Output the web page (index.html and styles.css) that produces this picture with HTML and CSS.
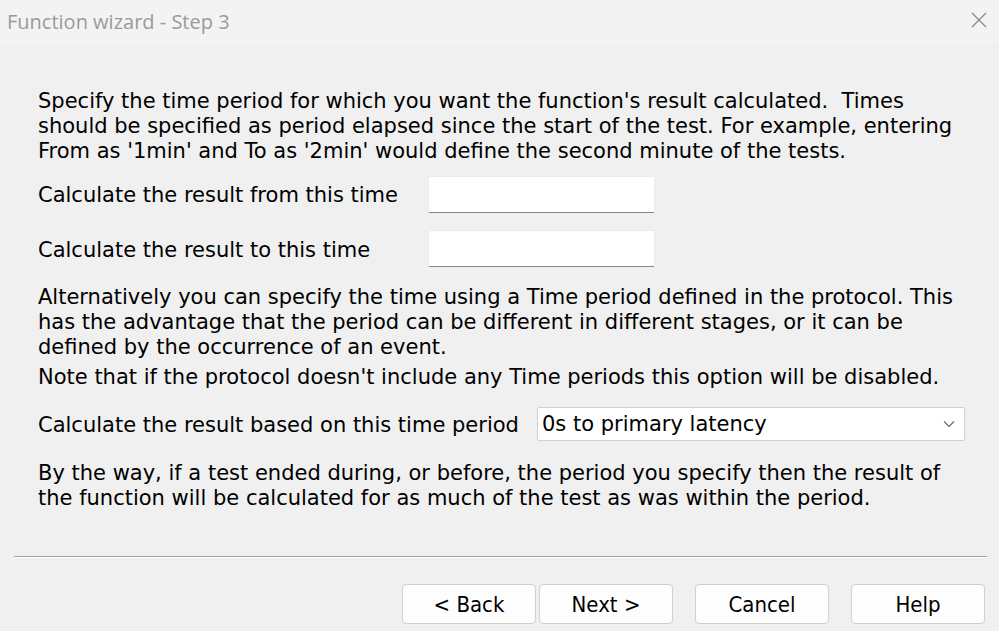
FILE: index.html
```html
<!DOCTYPE html>
<html>
<head>
<meta charset="utf-8">
<link rel="stylesheet" href="styles.css">
</head>
<body>
<div class="window">
  <div class="titlebar">
    <span class="title">Function wizard - Step 3</span>
    <svg class="close" width="16" height="16" viewBox="0 0 16 16"><path d="M1 1 L15 15 M15 1 L1 15" stroke="#8a8a8a" stroke-width="1.3" fill="none"/></svg>
  </div>
  <div class="content">
    <p class="para p1">Specify the time period for which you want the function's result calculated.&nbsp; Times<br>should be specified as period elapsed since the start of the test. For example, entering<br>From as '1min' and To as '2min' would define the second minute of the tests.</p>
    <div class="row row-from">
      <label class="label label-time">Calculate the result from this time</label>
      <div class="textbox"></div>
    </div>
    <div class="row row-to">
      <label class="label label-time label-to">Calculate the result to this time</label>
      <div class="textbox"></div>
    </div>
    <p class="para p2">Alternatively you can specify the time using a Time period defined in the protocol. This<br>has the advantage that the period can be different in different stages, or it can be<br>defined by the occurrence of an event.</p>
    <p class="para p3">Note that if the protocol doesn't include any Time periods this option will be disabled.</p>
    <div class="row row-combo">
      <label class="label label-combo">Calculate the result based on this time period</label>
      <div class="combo"><span class="combo-text">0s to primary latency</span><svg class="chev" width="12" height="8" viewBox="0 0 12 8"><path d="M1 1.5 L6 6.5 L11 1.5" stroke="#6a6a6a" stroke-width="1.2" fill="none"/></svg></div>
    </div>
    <p class="para p4">By the way, if a test ended during, or before, the period you specify then the result of<br>the function will be calculated for as much of the test as was within the period.</p>
  </div>
  <div class="separator"></div>
  <div class="buttons">
    <button class="btn">&lt; Back</button>
    <button class="btn btn-next">Next &gt;</button>
    <button class="btn btn-gap">Cancel</button>
    <button class="btn btn-gap">Help</button>
  </div>
</div>
</body>
</html>
```
FILE: styles.css
```css
html, body {
  margin: 0;
  padding: 0;
  background: #f0f0f0;
}
.window {
  width: 999px;
  height: 631px;
  overflow: hidden;
  background: #f0f0f0;
  font-family: "DejaVu Sans", Verdana, sans-serif;
  color: #000;
}
.titlebar {
  height: 44px;
  background: #f3f3f3;
  display: flex;
  align-items: center;
  justify-content: space-between;
  padding: 0 12px 0 7px;
}
.title {
  font-family: "Open Sans", "Noto Sans", sans-serif;
  font-size: 20px;
  color: #9a9a9a;
  margin-top: -2px;
}
.close {
  margin-top: -4px;
}
.content {
  padding: 45px 0 0 38px;
  font-size: 21px;
}
.para {
  margin: 0;
  line-height: 25px;
  white-space: nowrap;
}
.row {
  display: flex;
  align-items: flex-start;
}
.label {
  line-height: 25px;
  flex: none;
}
.label-time {
  width: 390px;
  margin-top: 7px;
}
.label-to {
  margin-top: 8px;
}
.row-from {
  margin-top: 12px;
}
.row-to {
  margin-top: 17px;
}
.textbox {
  width: 227px;
  height: 37px;
  box-sizing: border-box;
  background: #fff;
  border: 1px solid #ececec;
  border-bottom: 1px solid #858585;
  border-radius: 2px;
}
.p2 {
  margin-top: 18px;
}
.p3 {
  margin-top: 5px;
}
.row-combo {
  margin-top: 17px;
}
.label-combo {
  width: 499px;
  margin-top: 6px;
}
.combo {
  width: 428px;
  height: 34px;
  box-sizing: border-box;
  background: #fff;
  border: 1px solid #cfcfcf;
  border-radius: 2px;
  display: flex;
  align-items: center;
  justify-content: space-between;
  padding: 0 9px 0 4px;
}
.p4 {
  margin-top: 20px;
}
.separator {
  margin: 45px 12px 0 14px;
  height: 1px;
  background: #a0a0a0;
  border-bottom: 1px solid #ffffff;
}
.buttons {
  display: flex;
  margin-top: 26px;
  padding-left: 402px;
}
.btn {
  width: 134px;
  height: 40px;
  box-sizing: border-box;
  background: #fdfdfd;
  border: 1px solid #d0d0d0;
  border-radius: 4px;
  font-family: "DejaVu Sans Condensed", "DejaVu Sans", sans-serif;
  font-size: 22px;
  color: #000;
  padding: 0;
}
.btn-next {
  margin-left: 3px;
}
.btn-gap {
  margin-left: 22px;
}
```
